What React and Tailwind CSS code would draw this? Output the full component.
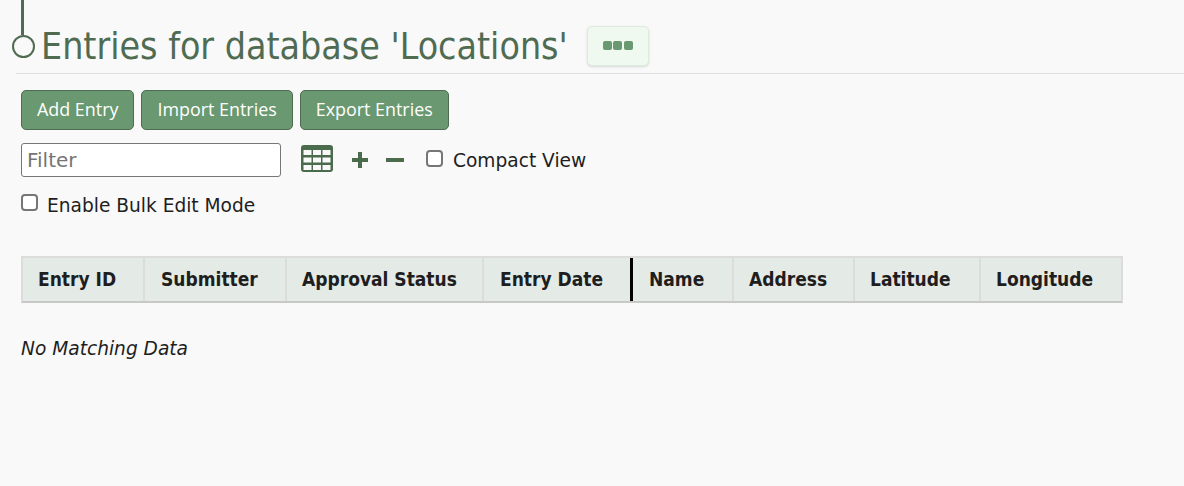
const columns = [
  { name: 'Entry ID', width: 'w-[122px]', pad: 'pl-[15px]' },
  { name: 'Submitter', width: 'w-[142px]', pad: 'pl-[16px]' },
  { name: 'Approval Status', width: 'w-[197px]', pad: 'pl-[15px]' },
  { name: 'Entry Date', width: 'w-[149px]', pad: 'pl-[16px]', split: true },
  { name: 'Name', width: 'w-[101px]', pad: 'pl-[16px]' },
  { name: 'Address', width: 'w-[121px]', pad: 'pl-[15px]' },
  { name: 'Latitude', width: 'w-[126px]', pad: 'pl-[15px]' },
  { name: 'Longitude', width: 'w-[144px]', pad: 'pl-[15px]', last: true },
]

function Button({ children }) {
  return (
    <button className="h-10 px-[15px] pb-[2px] rounded-[5px] border border-[#4f6b52] bg-[#6a9870] text-white text-[17.9px] font-['Open_Sans','Noto_Sans',sans-serif]">
      {children}
    </button>
  )
}

function GridIcon() {
  return (
    <svg width="32" height="28" viewBox="0 0 32 28" className="text-[#4a6b4c]">
      <rect x="0" y="0" width="32" height="27" rx="3" fill="currentColor" />
      {[0, 1, 2].map(row =>
        [0, 1, 2].map(col => (
          <rect
            key={`${row}-${col}`}
            x={2.5 + col * 9.5}
            y={5 + row * 7.5}
            width="8"
            height="5"
            fill="#f9f9f9"
          />
        ))
      )}
    </svg>
  )
}

export default function App() {
  return (
    <div className="relative min-h-[486px] bg-[#f9f9f9] text-[#1e1e1e] font-['DejaVu_Sans',sans-serif] text-[18.6px] overflow-hidden">
      {/* Timeline marker */}
      <div className="absolute left-[21px] top-0 w-[3px] h-[35px] bg-[#4f6b52]" />
      <div className="absolute left-[12px] top-[35px] w-[23px] h-[23px] rounded-full border-[2.5px] border-[#4f6b52]" />

      {/* Header */}
      <div className="ml-4 h-[74px] border-b border-[#e0e0e0] flex items-start">
        <h1 className="ml-[25px] mt-[24px] text-[37.2px] leading-[44px] font-normal text-[#4f6b52] font-['DejaVu_Sans_Condensed','DejaVu_Sans',sans-serif]">
          Entries for database 'Locations'
        </h1>
        <button className="ml-[19px] mt-[26px] w-[62px] h-10 pb-[2px] rounded-[5px] border border-[#dcebdd] bg-[#eff9f0] flex items-center justify-center gap-[1.5px] shadow-sm">
          <span className="w-[9px] h-[9px] rounded-[2px] bg-[#6a9870]" />
          <span className="w-[9px] h-[9px] rounded-[2px] bg-[#6a9870]" />
          <span className="w-[9px] h-[9px] rounded-[2px] bg-[#6a9870]" />
        </button>
      </div>

      <div className="ml-[21px]">
        {/* Actions */}
        <div className="mt-4 flex gap-[7px]">
          <Button>Add Entry</Button>
          <Button>Import Entries</Button>
          <Button>Export Entries</Button>
        </div>

        {/* Filter row */}
        <div className="mt-[13px] flex items-center h-[34px]">
          <input
            placeholder="Filter"
            className="w-[260px] h-[34px] px-[5px] bg-white border border-[#767676] rounded-[3px] text-[20px] placeholder:text-[#757575]"
          />
          <span className="ml-5 mb-[2px]"><GridIcon /></span>
          <svg width="18" height="18" viewBox="0 0 18 18" className="ml-[18px] text-[#4a6b4c]">
            <path d="M7 1h4v6h6v4h-6v6H7v-6H1V7h6z" fill="currentColor" />
          </svg>
          <svg width="18" height="18" viewBox="0 0 18 18" className="ml-[17px] text-[#4a6b4c]">
            <rect x="0" y="7" width="18" height="4" fill="currentColor" />
          </svg>
          <label className="ml-[22px] flex items-center gap-[10px]">
            <input type="checkbox" className="w-[17px] h-[17px] -mt-[2px] appearance-none bg-white border-2 border-[#767676] rounded-[4px]" />
            <span className="pt-[2px]">Compact View</span>
          </label>
        </div>

        {/* Bulk edit */}
        <label className="mt-[15px] flex items-center gap-[9px] h-[26px]">
          <input type="checkbox" className="w-[17px] h-[17px] -mt-[6px] appearance-none bg-white border-2 border-[#767676] rounded-[4px]" />
          <span className="pt-[2px]">Enable Bulk Edit Mode</span>
        </label>

        {/* Table header */}
        <div className="mt-[38px] flex w-[1102px] h-[47px] bg-[#e4eae6] border-2 border-[#dcdcdc] border-b-[#c8c8c8] font-bold font-['DejaVu_Sans_Condensed','DejaVu_Sans',sans-serif] text-[19px]">
          {columns.map(col => (
            <div
              key={col.name}
              className={`${col.width} ${col.pad} shrink-0 flex items-center ${
                col.last ? '' : col.split ? 'border-r-[3px] border-r-black' : 'border-r-2 border-r-[#dcdcdc]'
              }`}
            >
              {col.name}
            </div>
          ))}
        </div>

        <p className="mt-[32px] italic">No Matching Data</p>
      </div>
    </div>
  )
}
